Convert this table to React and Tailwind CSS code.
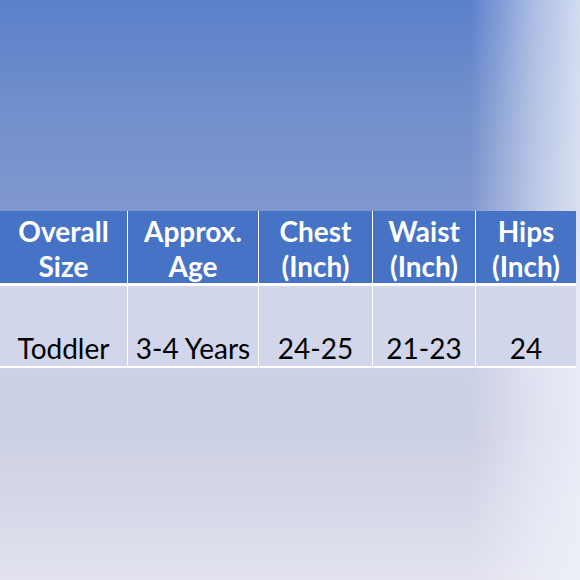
import React from 'react';

const headers = [
  ['Overall', 'Size'],
  ['Approx.', 'Age'],
  ['Chest', '(Inch)'],
  ['Waist', '(Inch)'],
  ['Hips', '(Inch)'],
];

const values = ['Toddler', '3-4 Years', '24-25', '21-23', '24'];

export default function App() {
  return (
    <div className="relative h-[580px] w-[580px] overflow-hidden bg-[linear-gradient(180deg,#5b80cb_0%,#7290cb_20%,#8198cf_36%,#cdd2ea_50%,#ccd0e4_75%,#e2e2ee_100%)] font-['Lato','Open_Sans',sans-serif]">
      <div className="pointer-events-none absolute inset-y-0 right-0 w-[110px] bg-[linear-gradient(90deg,rgba(255,255,255,0)_0%,rgba(240,242,250,0.55)_60%,rgba(240,242,250,0.8)_100%)]" />
      <div className="relative pt-[211px]">
        <div className="grid w-[576px] grid-cols-[127px_130px_113px_102px_100px] gap-x-[1px] gap-y-[3px] bg-white pb-[2px]">
          {headers.map(([a, b]) => (
            <div
              key={a}
              className="flex h-[72px] flex-col items-center justify-center bg-[#4673c5] pt-[3px] text-[28px] font-bold leading-[35px] text-white"
            >
              <span>{a}</span>
              <span>{b}</span>
            </div>
          ))}
          {values.map((v) => (
            <div
              key={v}
              className="flex h-[80px] items-end justify-center bg-[#d1d6eb] text-[28px] leading-[36px] text-black"
            >
              {v}
            </div>
          ))}
        </div>
      </div>
    </div>
  );
}
